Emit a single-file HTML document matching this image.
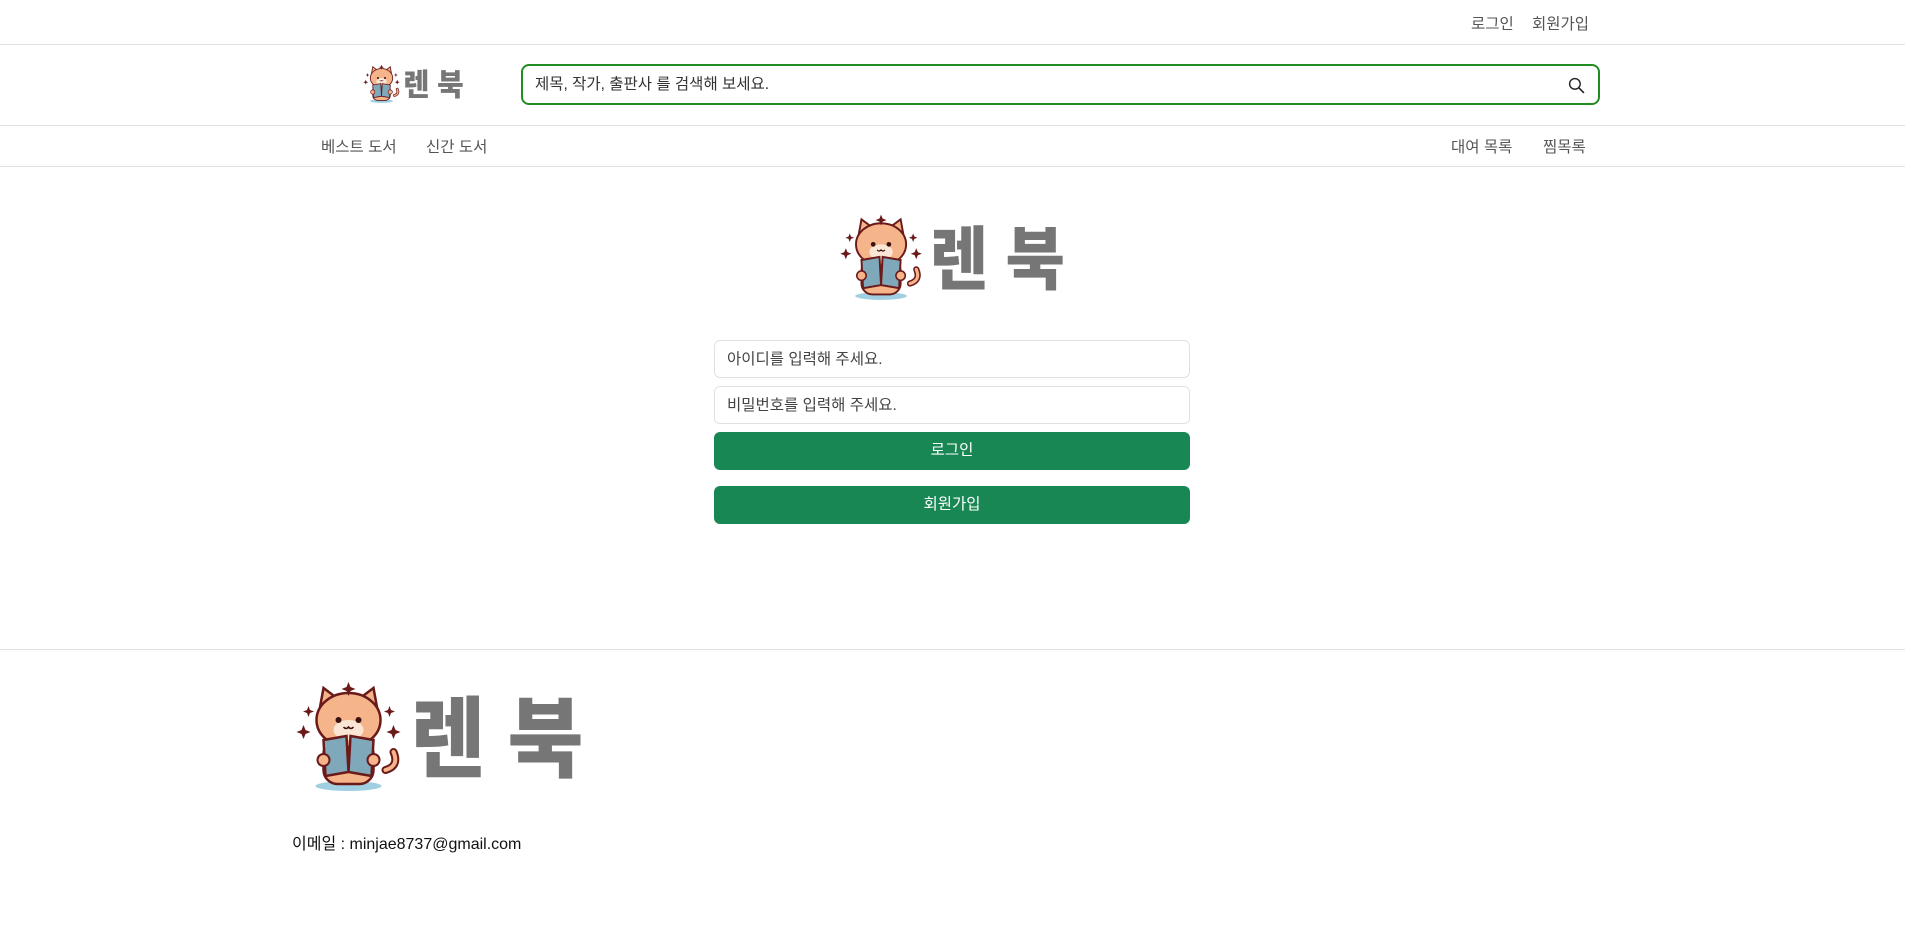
<!DOCTYPE html>
<html><head><meta charset="utf-8">
<style>
*{box-sizing:border-box;margin:0;padding:0}
body{width:1905px;height:949px;background:#fff;font-family:"Liberation Sans","Noto Sans CJK KR",sans-serif;color:#212529;position:relative;overflow:hidden}
.abs{position:absolute}
.line{position:absolute;left:0;width:1905px;height:1px;background:#dee2e6}
.nav{font-size:15.5px;color:#555}
.inp{position:absolute;left:714px;width:476px;height:38px;border:1px solid #dee2e6;border-radius:6px;font-size:15.5px;color:#444;padding:0 12px;line-height:37px}
.btn{position:absolute;left:714px;width:476px;height:38px;background:#198754;border-radius:6px;color:#fff;font-size:15.5px;text-align:center;line-height:38px}
</style></head><body>
<svg width="0" height="0" style="position:absolute">
<defs>
<g id="logo">
<ellipse cx="55" cy="106" rx="33" ry="5" fill="#9fcfe0"/>
<path d="M92 90 q14 -4 8 -18" stroke="#6b1a1a" stroke-width="8" fill="none" stroke-linecap="round"/>
<path d="M92 90 q14 -4 8 -18" stroke="#f5b48a" stroke-width="4" fill="none" stroke-linecap="round"/>
<rect x="30" y="60" width="50" height="44" rx="14" fill="#f5b48a" stroke="#6b1a1a" stroke-width="2.5"/>
<path d="M26 30 L30 8 L46 20 Z M84 30 L80 8 L64 20 Z" fill="#f5b48a" stroke="#6b1a1a" stroke-width="2.5"/>
<ellipse cx="55" cy="40" rx="32" ry="27" fill="#f5b48a" stroke="#6b1a1a" stroke-width="2.5"/>
<ellipse cx="55" cy="50" rx="15" ry="10" fill="#fbe6d6"/>
<circle cx="45" cy="40" r="3" fill="#3a1010"/><circle cx="65" cy="40" r="3" fill="#3a1010"/>
<path d="M50 47 q2.5 3 5 0 q2.5 3 5 0" stroke="#3a1010" stroke-width="1.5" fill="none"/>
<path d="M30 60 L53 56 L55 92 L32 96 Z M80 60 L57 56 L55 92 L78 96 Z" fill="#7fa9bb" stroke="#6b1a1a" stroke-width="2.5"/>
<circle cx="30" cy="80" r="6" fill="#f5b48a" stroke="#6b1a1a" stroke-width="2"/>
<circle cx="80" cy="80" r="6" fill="#f5b48a" stroke="#6b1a1a" stroke-width="2"/>
<path d="M55 2 l2 5 5 2 -5 2 -2 5 -2 -5 -5 -2 5 -2z M10 45 l2 5 5 2 -5 2 -2 5 -2 -5 -5 -2 5 -2z M100 45 l2 5 5 2 -5 2 -2 5 -2 -5 -5 -2 5 -2z M15 26 l1.5 4 4 1.5 -4 1.5 -1.5 4 -1.5 -4 -4 -1.5 4 -1.5z M96 26 l1.5 4 4 1.5 -4 1.5 -1.5 4 -1.5 -4 -4 -1.5 4 -1.5z" fill="#6b1a1a"/>
<text x="117" y="90" font-family="Noto Sans CJK KR,sans-serif" font-weight="900" font-size="88" fill="#767676" textLength="75" lengthAdjust="spacingAndGlyphs">렌</text>
<text x="214" y="90" font-family="Noto Sans CJK KR,sans-serif" font-weight="900" font-size="88" fill="#767676" textLength="76" lengthAdjust="spacingAndGlyphs">북</text>
</g>
</defs>
</svg>

<div class="abs nav" style="left:1471px;top:12px">로그인</div>
<div class="abs nav" style="left:1532px;top:12px">회원가입</div>
<div class="line" style="top:44px"></div>

<svg class="abs" style="left:362px;top:64px" width="102" height="42" viewBox="0 0 290 120"><use href="#logo"/></svg>
<div class="abs" style="left:521px;top:64px;width:1079px;height:41px;border:2px solid #228b22;border-radius:8px;font-size:15.5px;color:#333;padding:0 12px;line-height:38px">제목, 작가, 출판사 를 검색해 보세요.</div>
<svg class="abs" style="left:1568px;top:77px" width="17" height="17" viewBox="0 0 16 16"><circle cx="6.5" cy="6.5" r="5" fill="none" stroke="#222" stroke-width="1.3"/><path d="M10.2 10.2 L15 15" stroke="#222" stroke-width="1.5"/></svg>
<div class="line" style="top:125px"></div>

<div class="abs nav" style="left:321px;top:135px">베스트 도서</div>
<div class="abs nav" style="left:426px;top:135px">신간 도서</div>
<div class="abs nav" style="left:1451px;top:135px">대여 목록</div>
<div class="abs nav" style="left:1543px;top:135px">찜목록</div>
<div class="line" style="top:166px"></div>

<svg class="abs" style="left:838px;top:213px" width="227" height="94" viewBox="0 0 290 120"><use href="#logo"/></svg>

<div class="inp" style="top:340px">아이디를 입력해 주세요.</div>
<div class="inp" style="top:386px">비밀번호를 입력해 주세요.</div>
<div class="btn" style="top:432px">로그인</div>
<div class="btn" style="top:486px">회원가입</div>

<div class="line" style="top:649px"></div>
<svg class="abs" style="left:293px;top:680px" width="291" height="120" viewBox="0 0 290 120"><use href="#logo"/></svg>
<div class="abs" style="left:292px;top:830px;font-size:16px;color:#111">이메일 : minjae8737@gmail.com</div>
</body></html>
